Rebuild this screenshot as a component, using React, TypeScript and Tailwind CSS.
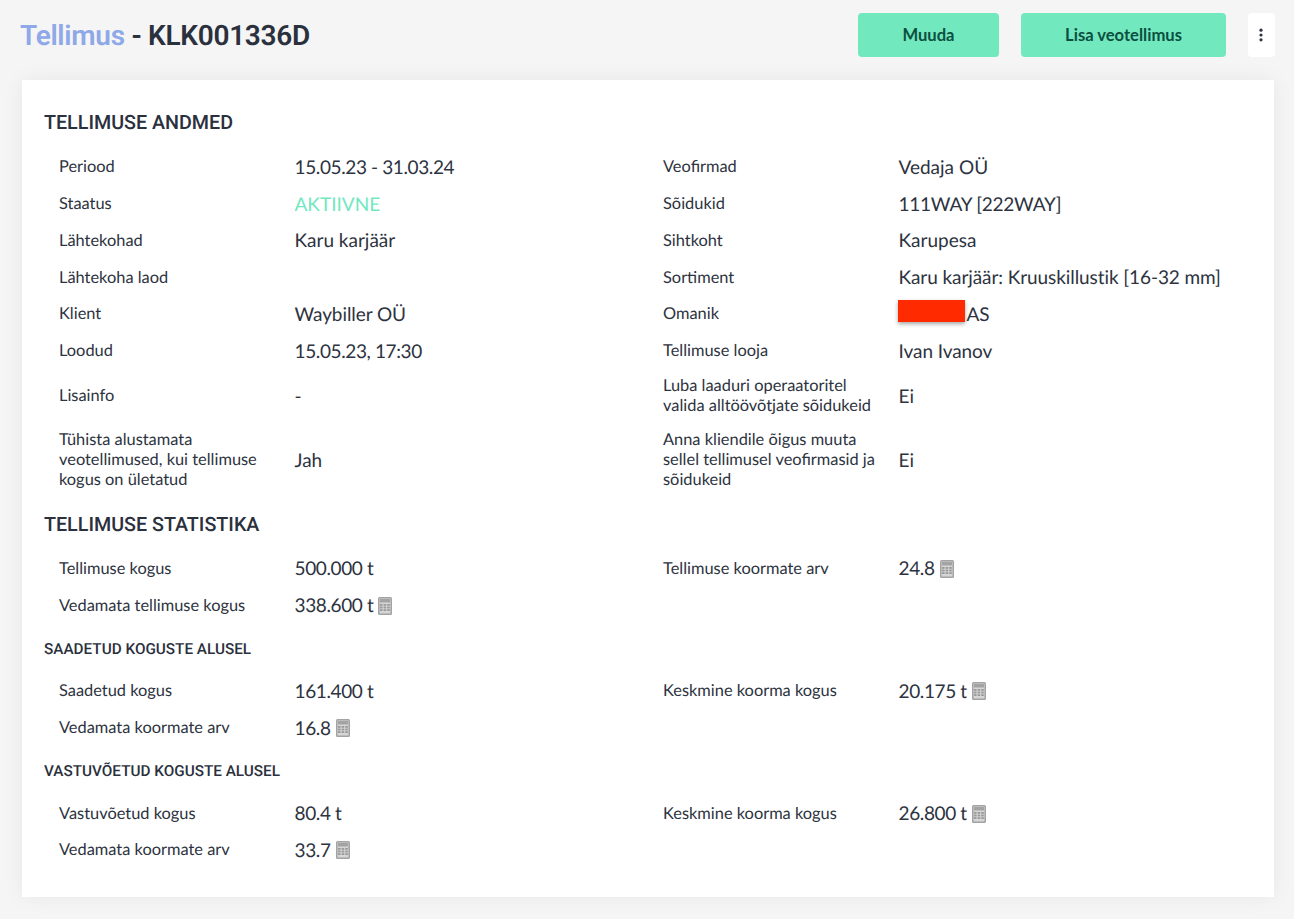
import React from "react";

function Calc() {
  return (
    <svg className="ml-[5px] shrink-0" width="14" height="18" viewBox="0 0 14 18">
      <rect x="0" y="0" width="14" height="18" rx="1.5" fill="#a3a3a3" />
      <rect x="1.5" y="1.5" width="11" height="15" fill="#d6d6d6" />
      <rect x="2" y="2" width="10" height="3.5" fill="#a3a3a3" />
      {[7, 9.6, 12.2].map((y) =>
        [2, 5.6, 9.2].map((x) => <rect key={`${x}-${y}`} x={x} y={y} width="2.6" height="1.8" fill="#9a9a9a" />)
      )}
    </svg>
  );
}

type Cell = { label: React.ReactNode; value?: React.ReactNode; calc?: boolean; cls?: string };

const NUM = "tracking-[-0.38px] text-[#2d3340]";
const MIX = "tracking-[-0.25px] text-[#2d3340]";

function Field({ label, value, calc, cls }: Cell) {
  return (
    <div className="flex items-center pl-[15px]">
      <div className="w-[235.5px] shrink-0 pr-3 text-[16.4px] leading-[20px] text-[#2d3340]">{label}</div>
      <div className={`flex items-center text-[19px] leading-[21px] ${cls ?? "text-[#2d3340]"}`}>
        {value}
        {calc && <Calc />}
      </div>
    </div>
  );
}

function Rows({ rows }: { rows: { h: string; l: Cell; r?: Cell }[] }) {
  return (
    <div className="flex flex-col">
      {rows.map((row, i) => (
        <div key={i} className={`grid grid-cols-2 ${row.h}`}>
          <Field {...row.l} />
          {row.r ? <Field {...row.r} /> : <div />}
        </div>
      ))}
    </div>
  );
}

const H = "h-[36.75px]";

export default function App() {
  return (
    <div className="min-h-[919px] bg-[#f5f5f5] px-[22px] pb-[22px] [text-rendering:geometricPrecision]" style={{ fontFamily: "Lato, sans-serif" }}>
      <header className="flex h-[80px] items-start justify-between">
        <h1 className="mt-[19px] -ml-[2px] font-['Roboto',sans-serif] text-[28px] font-semibold leading-[33px] tracking-[-0.3px] text-[#2b303d]">
          <span className="text-[#8fa8e8]">Tellimus</span> - KLK001336D
        </h1>
        <div className="mt-[13px] mr-[-3px] flex gap-[22px]">
          <button className="h-[44px] w-[141px] rounded-[4px] bg-[#72e8bf] text-[16.6px] font-bold text-[#0b4f40]">Muuda</button>
          <button className="h-[44px] w-[205px] rounded-[4px] bg-[#72e8bf] text-[16.6px] font-bold text-[#0b4f40]">Lisa veotellimus</button>
          <button className="flex h-[44px] w-[27px] items-center justify-center rounded-[4px] bg-white pr-[2px]">
            <svg width="4" height="14" viewBox="0 0 4 14" fill="#2d3340">
              <circle cx="2" cy="2.2" r="1.6" />
              <circle cx="2" cy="7" r="1.6" />
              <circle cx="2" cy="11.8" r="1.6" />
            </svg>
          </button>
        </div>
      </header>

      <main className="h-[817px] w-[1252px] bg-white px-[22px] pt-[31px] shadow-[0_0_20px_rgba(0,0,0,0.06)]">
        <h2 className="mb-[14px] font-['Roboto',sans-serif] text-[19.7px] font-medium leading-[24px] text-[#2b303d]">TELLIMUSE ANDMED</h2>
        <Rows
          rows={[
            { h: H, l: { label: "Periood", value: "15.05.23 - 31.03.24", cls: NUM }, r: { label: "Veofirmad", value: "Vedaja OÜ" } },
            { h: H, l: { label: "Staatus", value: "AKTIIVNE", cls: "text-[#72e8bf]" }, r: { label: "Sõidukid", value: "111WAY [222WAY]", cls: MIX } },
            { h: H, l: { label: "Lähtekohad", value: "Karu karjäär" }, r: { label: "Sihtkoht", value: "Karupesa" } },
            { h: H, l: { label: "Lähtekoha laod" }, r: { label: "Sortiment", value: "Karu karjäär: Kruuskillustik [16-32 mm]", cls: "tracking-[-0.08px] text-[#2d3340]" } },
            {
              h: H,
              l: { label: "Klient", value: "Waybiller OÜ", cls: "tracking-[-0.08px] text-[#2d3340]" },
              r: {
                label: "Omanik",
                value: (
                  <>
                    <span className="mr-[2px] -ml-px -mt-[6px] inline-block h-[22px] w-[67px] bg-[#ff2a00] shadow-[0_2px_4px_rgba(0,0,0,0.35)]" />
                    AS
                  </>
                ),
              },
            },
            { h: H, l: { label: "Loodud", value: "15.05.23, 17:30", cls: NUM }, r: { label: "Tellimuse looja", value: "Ivan Ivanov", cls: "tracking-[-0.08px] text-[#2d3340]" } },
            {
              h: "h-[53px]",
              l: { label: "Lisainfo", value: "-" },
              r: { label: "Luba laaduri operaatoritel valida alltöövõtjate sõidukeid", value: "Ei" },
            },
            {
              h: "h-[75px]",
              l: { label: "Tühista alustamata veotellimused, kui tellimuse kogus on ületatud", value: "Jah" },
              r: { label: "Anna kliendile õigus muuta sellel tellimusel veofirmasid ja sõidukeid", value: "Ei" },
            },
          ]}
        />
        <h2 className="mt-[15px] mb-[14px] font-['Roboto',sans-serif] text-[19.7px] font-medium leading-[24px] text-[#2b303d]">TELLIMUSE STATISTIKA</h2>
        <Rows
          rows={[
            { h: H, l: { label: "Tellimuse kogus", value: "500.000 t", cls: NUM }, r: { label: "Tellimuse koormate arv", value: "24.8", calc: true, cls: NUM } },
            { h: H, l: { label: "Vedamata tellimuse kogus", value: "338.600 t", calc: true, cls: NUM } },
          ]}
        />
        <h3 className="mt-[16px] mb-[15px] font-['Roboto',sans-serif] text-[15.3px] font-medium leading-[18px] text-[#2b303d]">SAADETUD KOGUSTE ALUSEL</h3>
        <Rows
          rows={[
            { h: H, l: { label: "Saadetud kogus", value: "161.400 t", cls: NUM }, r: { label: "Keskmine koorma kogus", value: "20.175 t", calc: true, cls: NUM } },
            { h: H, l: { label: "Vedamata koormate arv", value: "16.8", calc: true, cls: NUM } },
          ]}
        />
        <h3 className="mt-[15px] mb-[16px] font-['Roboto',sans-serif] text-[15.3px] font-medium leading-[18px] text-[#2b303d]">VASTUVÕETUD KOGUSTE ALUSEL</h3>
        <Rows
          rows={[
            { h: "h-[36.5px]", l: { label: "Vastuvõetud kogus", value: "80.4 t", cls: NUM }, r: { label: "Keskmine koorma kogus", value: "26.800 t", calc: true, cls: NUM } },
            { h: "h-[36.5px]", l: { label: "Vedamata koormate arv", value: "33.7", calc: true, cls: NUM } },
          ]}
        />
      </main>
    </div>
  );
}
